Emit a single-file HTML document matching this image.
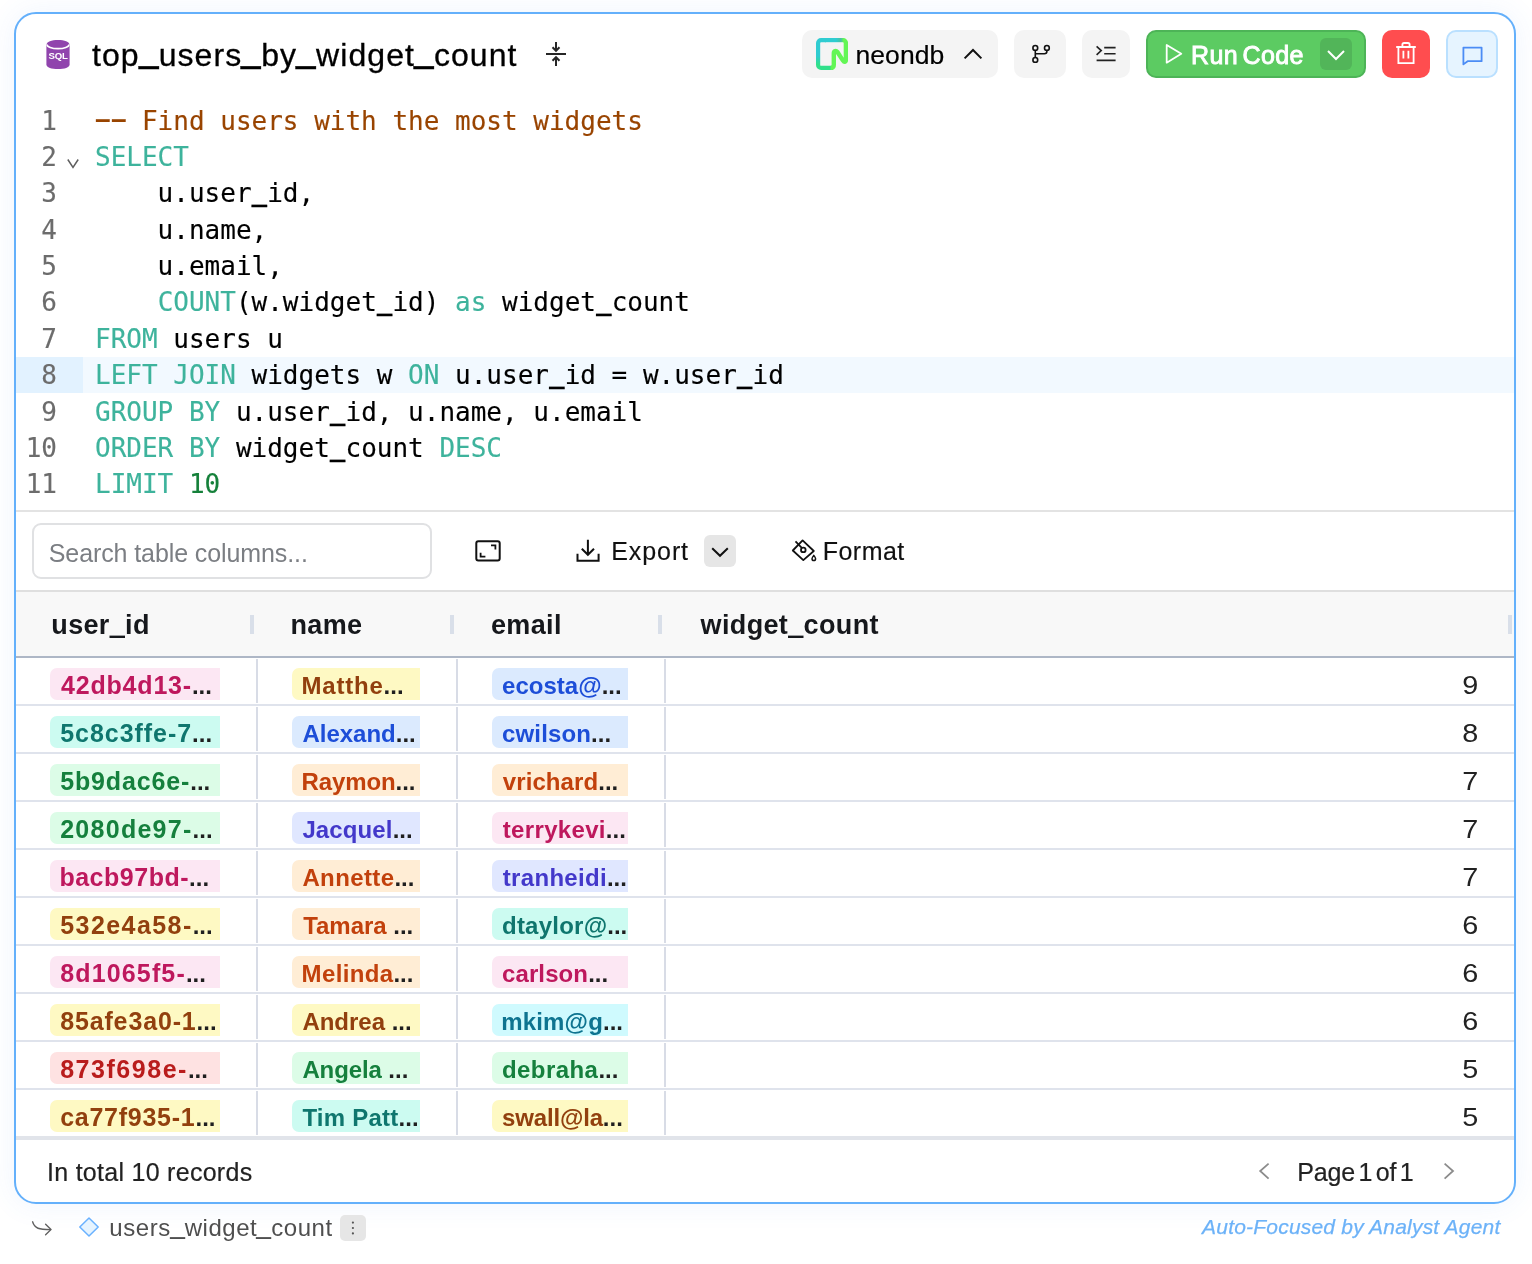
<!DOCTYPE html>
<html lang="en">
<head>
<meta charset="utf-8">
<title>top_users_by_widget_count</title>
<style>
*{box-sizing:border-box;margin:0;padding:0}
html,body{width:1532px;height:1264px;overflow:hidden;background:#fff}
body{font-family:"Liberation Sans",sans-serif;color:#000;position:relative}
.abs{position:absolute}
.card{position:absolute;left:14px;top:12px;width:1502px;height:1192px;border:2px solid #64b0fb;border-radius:22px;background:#fff;box-shadow:0 0 28px 2px rgba(70,130,240,.075)}
/* header */
.title{position:absolute;left:92px;top:37px;font-size:32px;line-height:36px;letter-spacing:1.08px;white-space:nowrap;color:#000;-webkit-text-stroke:.3px #000}
.tu{display:inline-block;transform-origin:50% 34px;transform:translateY(-3.4px) scale(1.1,1.35)}
.uu{display:inline-block;transform-origin:50% 28.4px;transform:translateY(-2.1px) scale(1.1,1.2)}
.btn{position:absolute;top:30px;height:48px;border-radius:10px;background:#f4f4f4}
.btn svg{position:absolute}
.lbl{position:absolute;white-space:nowrap}
/* code */
.code{position:absolute;left:16px;top:102px;width:1498px;font-family:"DejaVu Sans Mono","Liberation Mono",monospace;font-size:26px;line-height:36.4px;color:#000;-webkit-text-stroke:.15px}
.ln{position:relative;height:36.4px;white-space:pre}
.ln .n{position:absolute;left:0;top:.5px;width:41px;text-align:right;color:#6c6c6c}
.ln .c{position:absolute;left:79px;top:.5px}
.ln.act{background:#f2f9ff}
.ln.act .g{position:absolute;left:0;top:0;width:67px;height:100%;background:#e2f2ff}
.k{color:#3eb39c}.cm{color:#994400}.nu{color:#15803a}
.hy{display:inline-block;transform-origin:50% 20.5px;transform:translateY(-1.8px) scale(2.05,1.3)}
.us{display:inline-block;transform-origin:50% 32.5px;transform:translateY(-2.1px) scaleY(2.1)}
/* toolbar */
.search{position:absolute;left:32px;top:523px;width:400px;height:56px;border:2px solid #e0e1e3;border-radius:9px;background:#fff}
.search span{position:absolute;left:14.8px;top:11.5px;font-size:25px;line-height:32px;letter-spacing:-.1px;color:#7b7e83;white-space:nowrap}
/* table */
.thead{position:absolute;left:16px;top:590px;width:1498px;height:66px;background:#f8f8f8;border-top:2px solid #dfdfdf}
.thead-b{position:absolute;left:16px;top:656px;width:1498px;height:2px;background:#aeb7c6}
.th{position:absolute;top:608px;font-weight:bold;font-size:27px;line-height:34px;letter-spacing:.35px;color:#16181c;white-space:nowrap}
.hu{display:inline-block;transform-origin:50% 28.8px;transform:scaleY(2.3)}
.hd{position:absolute;top:615px;width:4px;height:19px;background:#d9dfe9}
.row{position:absolute;left:16px;width:1498px;height:48px;border-bottom:2px solid #dfe3ec}
.vs{position:absolute;top:1px;width:2px;height:44px;background:#d8dce6}
.pill{position:absolute;top:10px;height:32px;border-radius:7px 0 0 7px;font-weight:bold;font-size:25px;line-height:34px;padding-left:10px;white-space:nowrap;overflow:hidden}
.pill i{font-style:normal;color:#1f1f1f;letter-spacing:0;font-size:24px}
.num{position:absolute;right:35.6px;top:10px;font-size:25.5px;line-height:34px;color:#222;transform:scaleX(1.13);transform-origin:100% 50%}
.c-pink{background:#fce7f3;color:#be185d}
.c-teal{background:#ccfbf1;color:#0f766e}
.c-green{background:#dcfce7;color:#15803d}
.c-yellow{background:#fef9c3;color:#92400e}
.c-red{background:#fee2e2;color:#b91c1c}
.c-orange{background:#ffedd5;color:#c2410c}
.c-blue{background:#dbeafe;color:#1d4ed8}
.c-indigo{background:#e0e7ff;color:#4338ca}
.c-cyan{background:#cffafe;color:#0e7490}
.foot{position:absolute;font-size:23px;line-height:30px;color:#222;white-space:nowrap;-webkit-text-stroke:.2px}
</style>
</head>
<body>
<div class="card"></div>
<div id="wrap" style="position:absolute;left:0;top:0;width:1532px;height:1264px;will-change:transform">

<!-- HEADER -->
<div id="header">
<!-- sql icon -->
<svg class="abs" style="left:44px;top:38px" width="28" height="34" viewBox="0 0 28 34">
  <path d="M2.4 7.2 C2.4 3.6 7.6 2 14 2 C20.4 2 25.6 3.6 25.6 7.2 L25.6 26.4 C25.6 29.4 20.4 31 14 31 C7.6 31 2.4 29.4 2.4 26.4 Z" fill="#9044ad"/>
  <path d="M3 6.400A11 4.300 0 0 0 25 6.400" fill="none" stroke="#fff" stroke-width="1.700"/>
  <text x="14" y="20.800" text-anchor="middle" font-family="Liberation Sans, sans-serif" font-weight="bold" font-size="9.6" fill="#fff" letter-spacing="-0.2">SQL</text>
</svg>
<div class="title">top<span class="tu">_</span>users<span class="tu">_</span>by<span class="tu">_</span>widget<span class="tu">_</span>count</div>
<!-- collapse icon -->
<svg class="abs" style="left:544px;top:40px" width="24" height="28" viewBox="0 0 24 28" fill="none" stroke="#262626" stroke-width="2" stroke-linecap="butt" stroke-linejoin="miter">
  <path d="M2 14H22"/>
  <path d="M12 2V10.600M8.500 7.300L12 10.800L15.500 7.300"/>
  <path d="M12 26V17.400M8.500 20.700L12 17.200L15.500 20.700"/>
</svg>

<!-- neondb -->
<div class="btn" style="left:802px;width:196px">
  <svg style="left:14px;top:8px" width="32" height="32" viewBox="0 0 32 32" fill="none">
    <defs>
      <linearGradient id="ng1" gradientUnits="userSpaceOnUse" x1="0" y1="18" x2="0" y2="30"><stop offset="0" stop-color="#2fccd1"/><stop offset="0.7" stop-color="#30e08a"/></linearGradient>
      <linearGradient id="ng2" gradientUnits="userSpaceOnUse" x1="20" y1="0" x2="28" y2="0"><stop offset="0" stop-color="#2fccd1"/><stop offset="0.6" stop-color="#46c3a2"/><stop offset="1" stop-color="#63f655"/></linearGradient>
    </defs>
    <path d="M17 29.900H5.100A3 3 0 0 1 2.100 26.900V5.100A3 3 0 0 1 5.100 2.100H10" stroke="url(#ng1)" stroke-width="4.200" stroke-linejoin="round"/>
    <path d="M9 2.100H27" stroke="url(#ng2)" stroke-width="4.200"/>
    <path d="M14.600 29.900Q17.800 29.900 17.800 26.800V15.200C17.800 12.800 20 12.400 21.400 14L27 22.600C28.200 24.400 29.900 24 29.900 22.200V5.100A3 3 0 0 0 26.900 2.100" stroke="#63f655" stroke-width="4.400" stroke-linecap="butt" stroke-linejoin="round"/>
  </svg>
  <span class="lbl" style="left:53.4px;top:8.7px;font-size:26.5px;line-height:32px;letter-spacing:.1px;-webkit-text-stroke:.2px">neondb</span>
  <svg style="left:161px;top:17px" width="20" height="14" viewBox="0 0 20 14" fill="none" stroke="#111" stroke-width="2"><path d="M1.600 11.400L10 3L18.400 11.400"/></svg>
</div>

<!-- branch -->
<div class="btn" style="left:1014px;width:52px">
  <svg style="left:14px;top:12px" width="26" height="26" viewBox="0 0 26 26" fill="none" stroke="#111" stroke-width="1.600">
    <circle cx="7.300" cy="5.900" r="2.400"/><circle cx="18.900" cy="5.900" r="2.400"/><circle cx="7.300" cy="17.900" r="2.400"/>
    <path d="M7.300 8.300V15.500M7.300 11.800H16.400Q18.900 11.800 18.900 9.300V8.300"/>
  </svg>
</div>
<!-- format -->
<div class="btn" style="left:1082px;width:48px">
  <svg style="left:12px;top:12px" width="26" height="26" viewBox="0 0 26 26" fill="none" stroke="#222" stroke-width="1.650">
    <path d="M2.600 4.400L7.200 8.600L2.600 12.800"/>
    <path d="M10.200 5.600H21.600M10.200 11.700H21.600M2.600 18.400H21.600"/>
  </svg>
</div>
<!-- run code -->
<div class="btn" style="left:1146px;width:220px;background:#5ccb62;border:2px solid #4db457">
  <svg style="left:16px;top:11px" width="24" height="24" viewBox="0 0 24 24" fill="none" stroke="#fff" stroke-width="1.800" stroke-linejoin="round"><path d="M2.700 1.900V19.700L17.300 10.800Z"/></svg>
  <span class="lbl" style="left:43px;top:6.7px;font-size:25px;line-height:32px;letter-spacing:.45px;word-spacing:-3.2px;color:#fff;-webkit-text-stroke:.9px #fff">Run Code</span>
  <div class="abs" style="left:172px;top:6px;width:32px;height:32px;border-radius:6px;background:#52b559"></div>
  <svg style="left:179px;top:17px" width="18" height="12" viewBox="0 0 18 12" fill="none" stroke="#fff" stroke-width="2"><path d="M1 2L9 10L17 2"/></svg>
</div>
<!-- trash -->
<div class="btn" style="left:1382px;width:48px;background:#ff4d4f">
  <svg style="left:12px;top:11px" width="24" height="24" viewBox="0 0 24 24" fill="none" stroke="#fff" stroke-width="1.800">
    <path d="M2.200 6H21.800M8.400 6V3.600Q8.400 2 10 2H14Q15.600 2 15.600 3.600V6"/>
    <path d="M4.400 6.400V22.200H19.600V6.400"/>
    <path d="M9.400 9.800V17.600M14.400 9.800V17.600"/>
  </svg>
</div>
<!-- comment -->
<div class="btn" style="left:1446px;width:52px;background:#e6f4ff;border:2px solid #bae0ff">
  <svg style="left:12px;top:12px" width="26" height="24" viewBox="0 0 26 24" fill="none" stroke="#4b8cf5" stroke-width="1.800" stroke-linejoin="round">
    <path d="M3.400 3.600H21.600V17.200H7.600L3.400 20.400Z"/>
  </svg>
</div>
</div>

<!-- CODE -->
<div class="code" id="code">
<div class="ln"><span class="n">1</span><span class="c"><span class="cm"><span class="hy">-</span><span class="hy">-</span> Find users with the most widgets</span></span></div>
<div class="ln"><span class="n">2</span><svg class="abs" style="left:50px;top:18.600px" width="14" height="13" viewBox="0 0 14 13" fill="none" stroke="#5e5e5e" stroke-width="1.500"><path d="M1.800 2.500L7 10.300L12.200 2.500"/></svg><span class="c"><span class="k">SELECT</span></span></div>
<div class="ln"><span class="n">3</span><span class="c">    u.user<span class="us">_</span>id,</span></div>
<div class="ln"><span class="n">4</span><span class="c">    u.name,</span></div>
<div class="ln"><span class="n">5</span><span class="c">    u.email,</span></div>
<div class="ln"><span class="n">6</span><span class="c">    <span class="k">COUNT</span>(w.widget<span class="us">_</span>id) <span class="k">as</span> widget<span class="us">_</span>count</span></div>
<div class="ln"><span class="n">7</span><span class="c"><span class="k">FROM</span> users u</span></div>
<div class="ln act"><span class="g"></span><span class="n">8</span><span class="c"><span class="k">LEFT</span> <span class="k">JOIN</span> widgets w <span class="k">ON</span> u.user<span class="us">_</span>id = w.user<span class="us">_</span>id</span></div>
<div class="ln"><span class="n">9</span><span class="c"><span class="k">GROUP</span> <span class="k">BY</span> u.user<span class="us">_</span>id, u.name, u.email</span></div>
<div class="ln"><span class="n">10</span><span class="c"><span class="k">ORDER</span> <span class="k">BY</span> widget<span class="us">_</span>count <span class="k">DESC</span></span></div>
<div class="ln"><span class="n">11</span><span class="c"><span class="k">LIMIT</span> <span class="nu">10</span></span></div>
</div>
<div class="abs" style="left:16px;top:510px;width:1498px;height:2px;background:#e3e3e3"></div>

<!-- TOOLBAR -->
<div id="toolbar">
<div class="search"><span>Search table columns...</span></div>
<!-- fullscreen -->
<svg class="abs" style="left:474px;top:539px" width="28" height="24" viewBox="0 0 28 24" fill="none" stroke="#111" stroke-width="2">
  <rect x="2.300" y="2.200" width="23.400" height="19.400" rx="2"/>
  <path d="M6.600 13.800V17.600H11.400M17 6.400H21.400V10.400" stroke-width="1.800"/>
</svg>
<!-- export -->
<svg class="abs" style="left:574px;top:538px" width="28" height="26" viewBox="0 0 28 26" fill="none" stroke="#111" stroke-width="2">
  <path d="M3.500 15.800V22.700H24.600V15.800"/>
  <path d="M13.900 1.800V16.400M7.800 10.800L13.900 16.800L20 10.800"/>
</svg>
<span class="lbl" style="left:611.3px;top:535px;font-size:25px;line-height:32px;letter-spacing:.9px;color:#111;-webkit-text-stroke:.15px #111">Export</span>
<div class="abs" style="left:704px;top:535px;width:32px;height:32px;border-radius:6px;background:#e6e6e6"></div>
<svg class="abs" style="left:711px;top:546px" width="18" height="12" viewBox="0 0 18 12" fill="none" stroke="#111" stroke-width="2"><path d="M1.200 2.200L9 9.800L16.800 2.200"/></svg>
<!-- format -->
<svg class="abs" style="left:790px;top:538px" width="28" height="26" viewBox="0 0 28 26" fill="none" stroke="#111" stroke-width="1.800" stroke-linejoin="round">
  <path d="M12.600 2.400L23.800 13L13.300 22.100L2.800 12.500Z"/>
  <path d="M5.500 3.400L11.800 9.800"/>
  <circle cx="13.300" cy="11.900" r="2.300"/>
  <path d="M23.800 17.400C22.600 19 22 20 22 20.800A1.800 1.800 0 0 0 25.600 20.800C25.600 20 25 19 23.800 17.400Z" stroke-width="1.500"/>
</svg>
<span class="lbl" style="left:822.8px;top:535px;font-size:25px;line-height:32px;letter-spacing:.45px;color:#111;-webkit-text-stroke:.15px #111">Format</span>
</div>

<!-- TABLE -->
<div id="table">
<div class="thead"></div>
<div class="thead-b"></div>
<span class="th" style="left:51.3px">user<span class="hu">_</span>id</span>
<span class="th" style="left:290.5px">name</span>
<span class="th" style="left:491px">email</span>
<span class="th" style="left:700.6px">widget<span class="hu">_</span>count</span>
<span class="hd" style="left:250px"></span><span class="hd" style="left:450px"></span><span class="hd" style="left:658px"></span><span class="hd" style="left:1508px"></span>
<div class="row" style="top:658px"><span class="pill c-pink" style="left:34px;width:170px;padding-left:11.00px;letter-spacing:0.81px">42db4d13-<i>...</i></span><span class="pill c-yellow" style="left:276px;width:128px;padding-left:9.60px;letter-spacing:0.77px;font-size:24px;line-height:35.4px">Matthe<i>...</i></span><span class="pill c-blue" style="left:476px;width:136px;padding-left:10.00px;letter-spacing:0.03px;font-size:24px;line-height:35.4px">ecosta@<i>...</i></span><span class="vs" style="left:240px"></span><span class="vs" style="left:440px"></span><span class="vs" style="left:648px"></span><span class="num">9</span></div>
<div class="row" style="top:706px"><span class="pill c-teal" style="left:34px;width:170px;padding-left:10.20px;letter-spacing:0.96px">5c8c3ffe-7<i>...</i></span><span class="pill c-blue" style="left:276px;width:128px;padding-left:10.40px;letter-spacing:0.00px;font-size:24px;line-height:35.4px">Alexand<i>...</i></span><span class="pill c-blue" style="left:476px;width:136px;padding-left:10.00px;letter-spacing:0.15px;font-size:24px;line-height:35.4px">cwilson<i>...</i></span><span class="vs" style="left:240px"></span><span class="vs" style="left:440px"></span><span class="vs" style="left:648px"></span><span class="num">8</span></div>
<div class="row" style="top:754px"><span class="pill c-green" style="left:34px;width:170px;padding-left:10.20px;letter-spacing:0.86px">5b9dac6e-<i>...</i></span><span class="pill c-orange" style="left:276px;width:128px;padding-left:9.60px;letter-spacing:-0.13px;font-size:24px;line-height:35.4px">Raymon<i>...</i></span><span class="pill c-orange" style="left:476px;width:136px;padding-left:10.80px;letter-spacing:0.09px;font-size:24px;line-height:35.4px">vrichard<i>...</i></span><span class="vs" style="left:240px"></span><span class="vs" style="left:440px"></span><span class="vs" style="left:648px"></span><span class="num">7</span></div>
<div class="row" style="top:802px"><span class="pill c-green" style="left:34px;width:170px;padding-left:10.20px;letter-spacing:1.27px">2080de97-<i>...</i></span><span class="pill c-indigo" style="left:276px;width:128px;padding-left:10.40px;letter-spacing:0.12px;font-size:24px;line-height:35.4px">Jacquel<i>...</i></span><span class="pill c-pink" style="left:476px;width:136px;padding-left:10.80px;letter-spacing:0.33px;font-size:24px;line-height:35.4px">terrykevi<i>...</i></span><span class="vs" style="left:240px"></span><span class="vs" style="left:440px"></span><span class="vs" style="left:648px"></span><span class="num">7</span></div>
<div class="row" style="top:850px"><span class="pill c-pink" style="left:34px;width:170px;padding-left:9.40px;letter-spacing:0.52px">bacb97bd-<i>...</i></span><span class="pill c-orange" style="left:276px;width:128px;padding-left:10.40px;letter-spacing:0.38px;font-size:24px;line-height:35.4px">Annette<i>...</i></span><span class="pill c-indigo" style="left:476px;width:136px;padding-left:10.80px;letter-spacing:0.31px;font-size:24px;line-height:35.4px">tranheidi<i>...</i></span><span class="vs" style="left:240px"></span><span class="vs" style="left:440px"></span><span class="vs" style="left:648px"></span><span class="num">7</span></div>
<div class="row" style="top:898px"><span class="pill c-yellow" style="left:34px;width:170px;padding-left:10.20px;letter-spacing:1.44px">532e4a58-<i>...</i></span><span class="pill c-orange" style="left:276px;width:128px;padding-left:11.20px;letter-spacing:-0.03px;font-size:24px;line-height:35.4px">Tamara <i>...</i></span><span class="pill c-teal" style="left:476px;width:136px;padding-left:10.00px;letter-spacing:0.23px;font-size:24px;line-height:35.4px">dtaylor@<i>...</i></span><span class="vs" style="left:240px"></span><span class="vs" style="left:440px"></span><span class="vs" style="left:648px"></span><span class="num">6</span></div>
<div class="row" style="top:946px"><span class="pill c-pink" style="left:34px;width:170px;padding-left:10.20px;letter-spacing:1.15px">8d1065f5-<i>...</i></span><span class="pill c-orange" style="left:276px;width:128px;padding-left:9.60px;letter-spacing:0.35px;font-size:24px;line-height:35.4px">Melinda<i>...</i></span><span class="pill c-pink" style="left:476px;width:136px;padding-left:10.00px;letter-spacing:0.11px;font-size:24px;line-height:35.4px">carlson<i>...</i></span><span class="vs" style="left:240px"></span><span class="vs" style="left:440px"></span><span class="vs" style="left:648px"></span><span class="num">6</span></div>
<div class="row" style="top:994px"><span class="pill c-yellow" style="left:34px;width:170px;padding-left:10.20px;letter-spacing:0.85px">85afe3a0-1<i>...</i></span><span class="pill c-yellow" style="left:276px;width:128px;padding-left:10.40px;letter-spacing:-0.01px;font-size:24px;line-height:35.4px">Andrea <i>...</i></span><span class="pill c-cyan" style="left:476px;width:136px;padding-left:9.20px;letter-spacing:0.17px;font-size:24px;line-height:35.4px">mkim@g<i>...</i></span><span class="vs" style="left:240px"></span><span class="vs" style="left:440px"></span><span class="vs" style="left:648px"></span><span class="num">6</span></div>
<div class="row" style="top:1042px"><span class="pill c-red" style="left:34px;width:170px;padding-left:10.20px;letter-spacing:1.53px">873f698e-<i>...</i></span><span class="pill c-green" style="left:276px;width:128px;padding-left:10.40px;letter-spacing:-0.11px;font-size:24px;line-height:35.4px">Angela <i>...</i></span><span class="pill c-green" style="left:476px;width:136px;padding-left:10.00px;letter-spacing:0.43px;font-size:24px;line-height:35.4px">debraha<i>...</i></span><span class="vs" style="left:240px"></span><span class="vs" style="left:440px"></span><span class="vs" style="left:648px"></span><span class="num">5</span></div>
<div class="row" style="top:1090px"><span class="pill c-yellow" style="left:34px;width:170px;padding-left:10.20px;letter-spacing:0.74px">ca77f935-1<i>...</i></span><span class="pill c-teal" style="left:276px;width:128px;padding-left:10.40px;letter-spacing:0.24px;font-size:24px;line-height:35.4px">Tim Patt<i>...</i></span><span class="pill c-yellow" style="left:476px;width:136px;padding-left:10.00px;letter-spacing:-0.16px;font-size:24px;line-height:35.4px">swall@la<i>...</i></span><span class="vs" style="left:240px"></span><span class="vs" style="left:440px"></span><span class="vs" style="left:648px"></span><span class="num">5</span></div>
<div class="abs" style="left:16px;top:1136px;width:1498px;height:4px;background:#e1e4ea"></div></div>

<!-- FOOTER -->
<div id="footer">
<span class="foot" style="left:47px;top:1156.8px;font-size:25px;letter-spacing:.28px">In total 10 records</span>
<svg class="abs" style="left:1256px;top:1160px" width="16" height="22" viewBox="0 0 16 22" fill="none" stroke="#8c8c8c" stroke-width="1.800"><path d="M12.600 3.600L4.200 11L12.600 18.600"/></svg>
<span class="foot" style="left:1297.2px;top:1157px;font-size:25px;letter-spacing:-.15px;word-spacing:-3.3px">Page 1 of 1</span>
<svg class="abs" style="left:1441px;top:1160px" width="16" height="22" viewBox="0 0 16 22" fill="none" stroke="#8c8c8c" stroke-width="1.800"><path d="M3.600 3.600L12 11L3.600 18.600"/></svg>

<!-- below card -->
<svg class="abs" style="left:30px;top:1218px" width="24" height="20" viewBox="0 0 24 20" fill="none" stroke="#5f5f5f" stroke-width="1.350" stroke-linecap="round" stroke-linejoin="round">
  <path d="M2.600 3.800C4.600 10.600 9 11.600 20.600 11.600"/><path d="M15.600 6.200L21 11.600L15.600 16.800"/>
</svg>
<svg class="abs" style="left:78px;top:1216px" width="22" height="22" viewBox="0 0 22 22"><path d="M11 2L20.200 11L11 20L1.800 11Z" fill="#e6f4ff" stroke="#69b1ff" stroke-width="1.500" stroke-linejoin="round"/></svg>
<span class="lbl" style="left:109.3px;top:1211.6px;font-size:24px;line-height:32px;letter-spacing:.55px;color:#4f4f4f">users<span class="uu">_</span>widget<span class="uu">_</span>count</span>
<div class="abs" style="left:340px;top:1215px;width:26px;height:26px;border-radius:5px;background:#e6e6e6"></div>
<svg class="abs" style="left:340px;top:1215px" width="26" height="26" viewBox="0 0 26 26" fill="#555"><circle cx="12.900" cy="7.600" r="1.100"/><circle cx="12.900" cy="13" r="1.100"/><circle cx="12.900" cy="18.400" r="1.100"/></svg>
<span class="lbl" style="right:31.5px;top:1211.5px;font-size:21px;line-height:30px;font-style:italic;letter-spacing:.2px;color:#6cb2f8;-webkit-text-stroke:.25px">Auto-Focused by Analyst Agent</span>
</div>
</div>
</body>
</html>
